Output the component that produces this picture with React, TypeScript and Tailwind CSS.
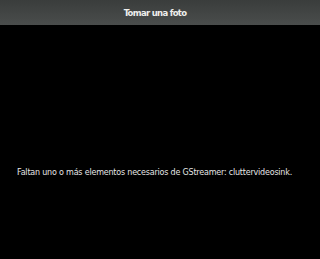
export default function App() {
  return (
    <div className="flex h-[259px] w-[320px] flex-col bg-black" style={{ fontFamily: '"DejaVu Sans", sans-serif' }}>
      <div className="flex h-[25px] items-center justify-center bg-gradient-to-b from-[#3a3d3c] to-[#4a4d4c] pr-[10px]">
        <span className="text-[8.5px] leading-[10px] font-bold tracking-[-0.7px] text-[#eeeeec]">Tomar una foto</span>
      </div>
      <div className="flex-1 pl-[17px] pt-[143px]">
        <p className="text-[8px] leading-[10px] tracking-[-0.2px] text-[#e6e6e6]">Faltan uno o más elementos necesarios de GStreamer: cluttervideosink.</p>
      </div>
    </div>
  );
}
